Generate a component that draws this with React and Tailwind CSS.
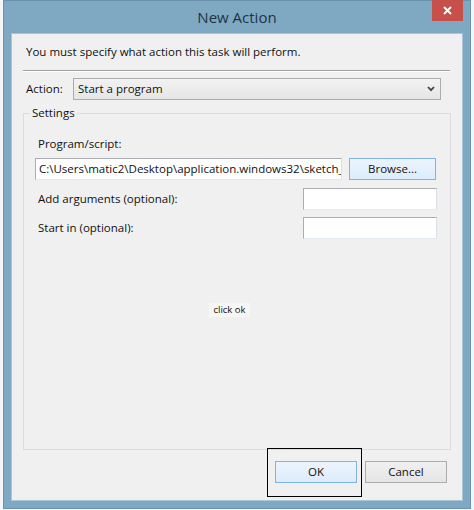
import React from 'react';

const font = { fontFamily: '"Open Sans", "Noto Sans", sans-serif' };

const TextBox = ({ className = '', children }) => (
  <div
    className={`h-[22px] bg-white border border-[#abadb3] border-b-[#e3e9ef] border-r-[#dbdfe6] flex items-center px-[3px] overflow-hidden whitespace-nowrap text-[11.5px] text-[#111] ${className}`}
  >
    {children}
  </div>
);

const Button = ({ label, primary, className = '' }) => (
  <div
    className={`h-[22px] flex items-center justify-center text-[11.5px] text-[#111] border ${
      primary
        ? 'border-[#7eb4ea] bg-gradient-to-b from-[#ecf4fc] to-[#dcecfc]'
        : 'border-[#acacac] bg-gradient-to-b from-[#f0f0f0] to-[#e5e5e5]'
    } ${className}`}
  >
    {label}
  </div>
);

export default function App() {
  return (
    <div className="w-[474px] h-[510px] bg-[#f4f6f8] pl-[3px]" style={font}>
      <div className="w-[468px] h-[509px] bg-[#7fa8c3] border border-[#6b93ae] flex flex-col">
        {/* title bar */}
        <div className="relative h-[32px] shrink-0 flex items-center justify-center">
          <span className="text-[15px] text-[#1d3446]">New Action</span>
          <div className="absolute right-[7px] -top-[1px] w-[31px] h-[21px] bg-[#c7504b] flex items-center justify-center">
            <svg width="9" height="9" viewBox="0 0 9 9">
              <path d="M1 1 L8 8 M8 1 L1 8" stroke="#fff" strokeWidth="1.8" />
            </svg>
          </div>
        </div>

        {/* client area */}
        <div className="mx-[7px] mb-[7px] flex-1 bg-[#f0f0f0] border border-[#a9c5d8] flex flex-col text-[11.5px] text-[#111]">
          <div className="mt-[10px] h-[16px] pl-[14px] leading-[16px]">
            You must specify what action this task will perform.
          </div>
          <div className="mt-[10px] ml-[11px] mr-[12px] border-t border-[#a0a0a0] border-b border-b-white" />

          <div className="mt-[6px] h-[22px] flex items-center">
            <span className="w-[61px] pl-[14px]">Action:</span>
            <div className="w-[368px] h-[22px] border border-[#acacac] bg-gradient-to-b from-[#f2f2f2] to-[#e6e6e6] flex items-center justify-between pl-[4px] pr-[5px]">
              <span>Start a program</span>
              <svg width="8" height="6" viewBox="0 0 8 6">
                <path d="M1 1 L4 4.2 L7 1" stroke="#444" strokeWidth="1.8" fill="none" />
              </svg>
            </div>
          </div>

          {/* Settings group */}
          <div className="relative mt-[13px] ml-[11px] w-[428px] h-[337px] border border-[#dcdcdc]">
            <span className="absolute -top-[9px] left-[6px] px-[2px] bg-[#f0f0f0] leading-[16px]">Settings</span>
            <div className="mt-[22px] pl-[14px] h-[16px] leading-[16px]">Program/script:</div>
            <div className="mt-[6px] flex pl-[11px]">
              <TextBox className="w-[307px]">C:\Users\matic2\Desktop\application.windows32\sketch_</TextBox>
              <Button label="Browse..." primary className="ml-[7px] w-[87px] border-[#3c7fb1]" />
            </div>
            <div className="mt-[8px] flex items-center">
              <span className="w-[279px] pl-[14px]">Add arguments (optional):</span>
              <TextBox className="w-[134px]" />
            </div>
            <div className="mt-[7px] flex items-center">
              <span className="w-[279px] pl-[14px]">Start in (optional):</span>
              <TextBox className="w-[134px]" />
            </div>
            <div className="mt-[64px] ml-[185px] w-[41px] h-[14px] bg-[#f6f6f6] flex items-center justify-center text-[9.5px]">
              click ok
            </div>
          </div>

          {/* footer buttons */}
          <div className="relative mt-[11px] flex justify-end pr-[15px]">
            <Button label="OK" primary className="w-[82px]" />
            <Button label="Cancel" className="ml-[8px] w-[82px]" />
            <div className="absolute left-[255px] -top-[13px] w-[95px] h-[49px] border border-black" />
          </div>
        </div>
      </div>
    </div>
  );
}
